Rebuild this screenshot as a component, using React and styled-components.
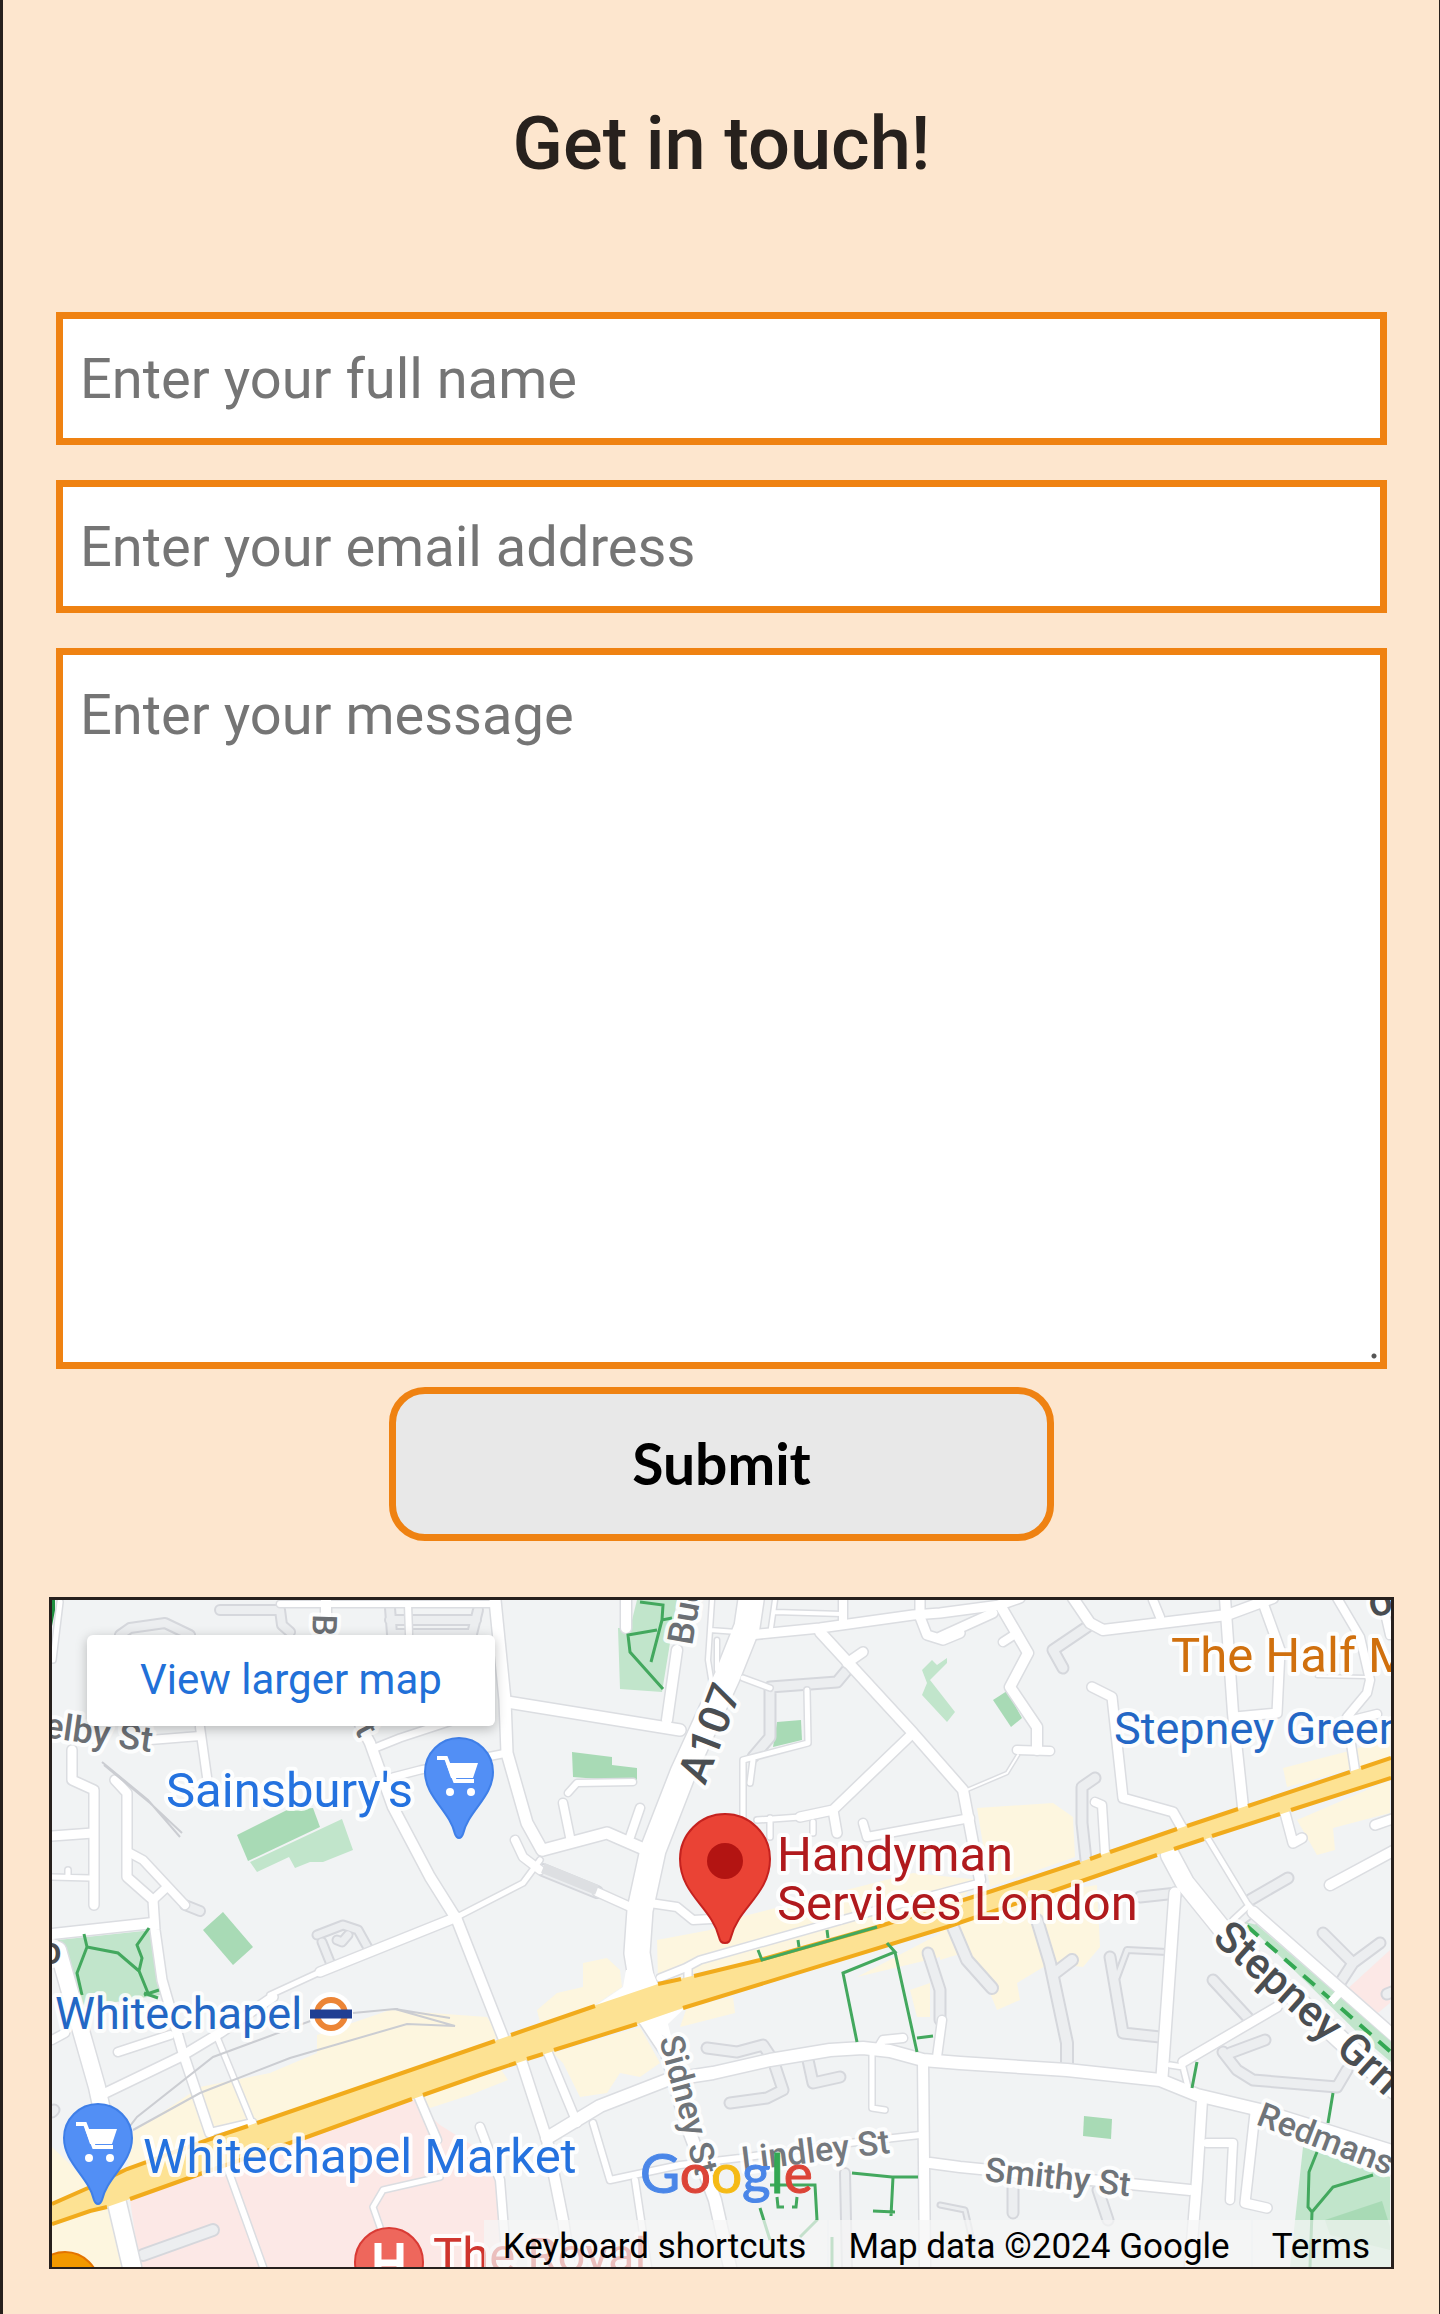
import React from "react";
import styled, { createGlobalStyle } from "styled-components";

const GlobalStyle = createGlobalStyle`
  *, *::before, *::after { box-sizing: border-box; }
  body {
    margin: 0;
    background: #fde6ce;
    font-family: Roboto, "Liberation Sans", sans-serif;
  }
`;

const Page = styled.main`
  min-height: 100vh;
  padding: 102px 45px 45px 46px;
  border-left: 3px solid #27201d;
  border-right: 1px solid #27201d;
  background: #fde6ce;
`;

const Title = styled.h1`
  margin: 0 0 126px;
  font-size: 74px;
  line-height: 84px;
  font-weight: 500;
  text-align: center;
  color: #27211d;
`;

const Form = styled.form`
  display: flex;
  flex-direction: column;
  gap: 35px;
  padding: 0 7px;
`;

const fieldStyle = `
  display: block;
  width: 100%;
  margin: 0;
  border: 7px solid #ef8212;
  border-radius: 0;
  outline: none;
  background-color: #fff;
  color: #27211d;
  font-family: inherit;
  font-size: 56px;
  line-height: 66px;
  &::placeholder { color: #757575; opacity: 1; }
`;

const Field = styled.input`
  ${fieldStyle}
  height: 133px;
  padding: 0 17px;
`;

const Message = styled.textarea`
  ${fieldStyle}
  height: 721px;
  padding: 27px 17px;
  resize: none;
  background-image: radial-gradient(circle, #555 2px, transparent 3px);
  background-size: 6px 6px;
  background-position: right 3px bottom 3px;
  background-repeat: no-repeat;
`;

const FormBody = styled.div`
  display: flex;
  flex-direction: column;
  gap: 18px;
`;

const Submit = styled.button`
  align-self: center;
  width: 50%;
  height: 154px;
  padding: 0 0 2px;
  border: 7px solid #ef8212;
  border-radius: 36px;
  background: #e8e8e8;
  color: #000;
  font-family: Lato, "Liberation Sans", sans-serif;
  font-size: 57px;
  font-weight: 700;
  cursor: pointer;
`;

const MapFrame = styled.section`
  position: relative;
  height: 672px;
  margin-top: 56px;
  border: 3px solid #27201d;
  border-bottom-width: 2px;
  overflow: hidden;
  background: #f1f3f4;
`;

const MapCanvas = styled.svg`
  display: block;
  width: 100%;
  height: 100%;
  font-family: Roboto, "Liberation Sans", sans-serif;
`;

const LargerMap = styled.a`
  position: absolute;
  top: 35px;
  left: 35px;
  padding: 19px 53px 21px;
  border-radius: 6px;
  background: #fff;
  box-shadow: 0 3px 12px rgba(0, 0, 0, 0.25);
  color: #2170d8;
  font-size: 42px;
  line-height: 51px;
  text-decoration: none;
`;

const Attribution = styled.div`
  position: absolute;
  right: 0;
  bottom: 0;
  display: flex;
  gap: 2px;
  height: 47px;
  font-size: 35px;
  line-height: 41px;
  color: #000;

  & > * {
    padding: 6px 21px 0 19px;
    background: rgba(245, 245, 245, 0.72);
  }
`;

const PlainButton = styled.button`
  border: 0;
  color: inherit;
  font: inherit;
  cursor: pointer;
`;

const PlainLink = styled.a`
  color: inherit;
  text-decoration: none;
`;

const COLORS = {
  shop: "#fdf6df",
  health: "#fce8e6",
  park: "#c1e5cb",
  lawn: "#a8dab5",
};

const AREAS = [
  ["shop", "M90 544 160 497 230 483 277 463 277 445 350 420 447 427 460 447 187 543 87 579Z"],
  ["shop", "M377 503 460 478 468 490 430 505 390 518Z"],
  ["shop", "M12 557 33 577 50 598 12 614ZM12 634 67 617 83 677 12 677Z"],
  ["shop", "M497 420 517 403 543 397 543 373 567 368 580 380 582 397 553 416 500 433Z"],
  ["shop", "M513 463 600 437 620 473 600 487 580 483 567 503 540 507 523 473Z"],
  ["shop", "M617 350 670 340 700 327 873 283 940 290 920 310 720 370 618 390Z"],
  ["shop", "M647 417 693 407 695 423 640 437Z"],
  ["shop", "M817 387 907 340 917 363 817 387ZM870 400 890 393 890 427 877 427Z"],
  ["shop", "M937 218 1013 213 1033 227 1035 267 950 297Z"],
  ["shop", "M1243 178 1313 160 1350 147 1350 168 1247 197Z"],
  ["shop", "M1257 230 1350 190 1350 223 1293 238 1295 260 1277 265Z"],
  ["shop", "M900 340 1010 302 1057 295 1060 357 1043 377 1010 373 977 393 980 410 957 420 950 403 923 363 900 370Z"],
  ["health", "M90 610 370 507 400 535 440 560 460 590 462 677 100 677Z"],
  ["health", "M1303 403 1350 360 1350 413 1333 427Z"],
  ["lawn", "M197 245 247 220 273 218 280 237 208 271Z"],
  ["park", "M210 272 302 229 313 260 283 272 270 272 255 278 249 267 217 282Z"],
  ["lawn", "M183 322 213 357 193 375 163 340Z"],
  ["park", "M18 350 113 340 120 405 45 417 27 405Z"],
  ["park", "M597 10 637 10 622 102 580 99 578 38 590 38Z"],
  ["lawn", "M532 162 572 167 572 175 597 178 597 192 533 187Z"],
  ["lawn", "M737 132 761 130 762 150 733 157Z"],
  ["park", "M882 80 892 70 897 75 907 68 907 73 890 90 915 122 907 132 882 105 887 93Z"],
  ["lawn", "M953 110 967 101 982 128 971 137Z"],
  ["lawn", "M1044 526 1072 529 1071 549 1043 546Z"],
  ["park", "M1263 557 1350 587 1350 677 1250 677Z"],
  ["lawn", "M1285 630 1342 611 1350 637 1350 660 1290 645Z"],
];

/* Each road is a path and the width of its surface. */
const LANES = [
  ["M145 315 160 321", 8],
  ["M180 20H240L242 35 250 42M80 45 90 38 125 33 150 45", 8],
  ["M350 18 352 44H432L438 20M350 30H436", 8],
  ["M807 80 797 92 730 97V147L713 167", 9],
  ["M503 280 557 302", 10],
  ["M1047 37 1013 60 1023 78", 9],
  ["M1055 188 1042 197 1042 233 1046 270", 9],
  ["M1210 310 1248 288M1100 307 1137 303", 9],
  ["M888 363 900 400V430", 9],
  ["M667 458 697 462 723 455 733 470 743 500 727 508 690 513", 9],
  ["M768 470 773 493 800 487", 9],
  ["M805 583 807 677", 8],
  ["M913 337 927 370 952 398", 10],
  ["M997 330 1010 373 1027 453V475M1015 383 1032 370", 10],
  ["M1070 367 1083 443 1120 447", 9],
  ["M1077 387 1087 360 1127 362", 4],
  ["M1173 390 1210 430M1225 450 1190 463", 9],
  ["M1183 462 1197 480 1213 490 1297 497 1307 480", 9],
  ["M1283 343 1313 373 1300 393M1313 373 1340 353M1352 402 1347 404", 9],
  ["M103 665 173 640", 10],
  ["M277 345 303 335 318 340 328 358M282 352 290 372M297 350 302 352 308 345", 7],
  ["M973 597V623M1058 600 1068 630", 9],
  ["M12 522 14 520", 9],
  ["M900 615 925 620 932 650", 3],
  ["M1220 327 1190 350", 6],
];

const STREETS = [
  ["M32 160V190L54 200V315", 9],
  ["M12 246 53 243", 9],
  ["M12 287 50 288M28 280V285", 5],
  ["M75 190 87 203V287L113 310 115 340 122 390 143 463 170 543", 9],
  ["M187 577 223 677", 6],
  ["M90 263 103 270 145 315M113 310 127 297", 8],
  ["M12 344 113 333", 10],
  ["M160 137 167 187M110 150 160 146", 8],
  ["M240 14 455 14M368 14 369 44", 6],
  ["M455 10 460 60 465 110 467 163 487 233 502 260", 11],
  ["M286 10V70L330 153 353 217 390 287 417 330 463 447", 10],
  ["M482 473 507 550 523 630 530 677", 10],
  ["M335 158 360 148 415 130M353 187 380 180 467 163", 7],
  ["M57 507 140 467 180 443 233 407", 9],
  ["M230 405 280 382", 5],
  ["M280 382 417 327", 9],
  ["M417 327 483 293 500 270", 5],
  ["M20 12 13 70", 5],
  ["M467 112 640 140", 11],
  ["M637 60 627 130M586 10V38", 10],
  ["M710 45 780 38 873 25 900 23 960 15 980 8", 9],
  ["M900 47 953 23M880 10V27L887 45 903 50 920 43", 9],
  ["M780 42 873 143 923 200 940 290", 10],
  ["M807 73 823 62", 9],
  ["M703 88 730 98", 5],
  ["M767 100 768 153 703 170V227M713 170 710 193", 5],
  ["M672 10 668 70 672 95M670 40 697 42M677 50V80", 4],
  ["M735 22 802 24M735 10 730 45", 4],
  ["M803 10V33M1113 10 1120 27", 8],
  ["M873 143 793 220 760 227M793 220 797 243", 9],
  ["M760 227 717 230M730 228V247M773 232V243", 5],
  ["M823 233 827 247 930 228", 8],
  ["M503 260 567 243 613 263", 11],
  ["M523 213 530 247M600 218 590 247", 8],
  ["M528 203 537 193 593 192", 6],
  ["M475 250 483 267 500 280", 8],
  ["M557 302 597 320M610 313 637 317 653 330 690 328", 8],
  ["M960 15 988 63 970 97 997 137V160", 10],
  ["M977 160 1010 161M963 52 977 43", 8],
  ["M978 165 967 183 927 200M1277 86 1327 87", 2],
  ["M1033 8 1050 33 1063 40 1187 25 1233 8", 10],
  ["M1052 97 1072 107 1083 208 1133 222 1142 238", 9],
  ["M1185 8 1193 123 1203 217", 10],
  ["M1223 13 1240 60 1237 123 1195 127", 9],
  ["M1297 8 1320 47 1330 90 1327 103 1307 127 1315 180M1313 130 1337 124", 8],
  ["M1342 10 1350 45", 8],
  ["M1055 212 1062 215 1065 263", 8],
  ["M1245 223 1253 253 1262 248M1335 235 1355 228", 9],
  ["M1290 295 1355 260", 10],
  ["M1167 247 1207 313 1230 340M1207 317 1193 330", 5],
  ["M1213 322 1355 447", 11],
  ["M1135 303 1133 330 1122 487", 11],
  ["M507 548 560 516 627 490 673 483 730 470 790 460 823 458 850 461 883 470 920 473 1027 480 1120 490 1157 505 1220 520 1355 562", 12],
  ["M508 463 537 533", 8],
  ["M605 430 627 463 645 530 675 610 690 677", 12],
  ["M553 533 570 590 640 575 700 568 800 554 880 545", 6],
  ["M595 590 608 677", 6],
  ["M883 470 885 677", 10],
  ["M902 430 897 467M840 455 843 450 863 448", 8],
  ["M832 463V518L845 520", 5],
  ["M890 573 920 577 1150 600", 10],
  ["M440 537 460 590 467 677", 8],
  ["M620 388 645 378 660 370 830 322 940 293M648 378V388", 7],
  ["M1237 417 1143 472", 9],
  ["M1130 475 1143 477 1148 497", 5],
  ["M1162 510 1157 590 1150 677", 10],
  ["M1167 553 1193 553 1190 610", 8],
  ["M1215 523 1205 613 1227 618", 9],
  ["M18 360 57 497 62 520", 16],
  ["M78 462 130 445M12 450 25 443", 8],
  ["M177 447 213 535", 5],
  ["M170 542 213 532", 6],
  ["M377 503 397 550", 8],
  ["M400 587 343 600 333 617 340 637", 5],
  ["M77 613 92 677", 18],
  ["M1130 265 1145 293 1187 345 1355 500", 18],
  ["M712 3 707 37 687 87 643 183 613 260 600 320 597 363 603 400", 25],
];

const FOOTPATHS = [
  "M600 12 623 15 622 30 632 28M617 40 588 45 590 62 623 99M622 30 611 72",
  "M44 344 47 357 37 383 42 405M47 357 78 363 99 381 108 403M109 338 97 355 102 368 99 381M104 405 119 400M104 403 118 408",
  "M718 360 722 370 837 337M758 350 759 357M787 340 788 348",
  "M847 353 855 362 803 383 817 452M855 362 877 462M877 448 893 446",
  "M812 583 852 587 878 587M853 587 851 626M833 621 855 622",
  "M730 595 775 595 777 630 760 647M720 618 730 650M737 607 738 617 744 617M757 607 756 617H752",
  "M792 647V677",
  "M1157 472 1152 498M1293 503 1288 533",
  "M1277 562 1269 582 1268 617 1272 622 1270 677M1272 622 1293 597 1333 585",
];

const RAILS = [
  "M90 536 97 527 173 467 273 430 313 423 355 419 410 428M355 419 415 436 367 434 250 468 160 503 93 540",
  "M62 172 108 210 140 247M64 175 110 213 142 243",
];

const LABELS = [
  { x: 3, y: 147, turn: 8, size: 36, weight: 500, color: "#6b6f74", text: "elby St" },
  { x: 273, y: 24, turn: 92, size: 34, weight: 500, color: "#6b6f74", text: "B" },
  { x: 314, y: 139, turn: 62, size: 34, weight: 500, color: "#6b6f74", text: "t" },
  { x: 652, y: 56, turn: -80, size: 36, weight: 500, color: "#6b6f74", text: "Buc" },
  { x: 665, y: 196, turn: -69, size: 43, weight: 500, color: "#4a4e52", text: "A107" },
  { x: 619, y: 449, turn: 75, size: 34, weight: 500, color: "#6f7479", text: "Sidney St" },
  { x: 703, y: 581, turn: -7, size: 34, weight: 500, color: "#75797e", text: "Lindley St" },
  { x: 944, y: 591, turn: 6, size: 34, weight: 500, color: "#6f7479", text: "Smithy St" },
  { x: 1215, y: 534, turn: 21, size: 34, weight: 500, color: "#6f7479", text: "Redmans" },
  { x: 1171, y: 350, turn: 42, size: 43, weight: 500, color: "#4a4e52", text: "Stepney Grn" },
  { x: 0, y: 374, turn: 0, size: 38, weight: 500, color: "#4a4e52", text: "o" },
  { x: 1332, y: 28, turn: -15, size: 42, weight: 500, color: "#4a4e52", text: "o" },
  { x: 126, y: 217, turn: 0, size: 49, weight: 400, color: "#2472df", text: "Sainsbury's" },
  { x: 15, y: 439, turn: 0, size: 45, weight: 400, color: "#2367c5", text: "Whitechapel" },
  { x: 103, y: 583, turn: 0, size: 49, weight: 400, color: "#2472df", text: "Whitechapel Market" },
  { x: 1131, y: 82, turn: 0, size: 49, weight: 400, color: "#d0700e", text: "The Half Moon" },
  { x: 1074, y: 154, turn: 0, size: 45, weight: 400, color: "#2367c5", text: "Stepney Green" },
  { x: 737, y: 281, turn: 0, size: 49, weight: 400, color: "#b01a1d", text: "Handyman" },
  { x: 737, y: 330, turn: 0, size: 49, weight: 400, color: "#b01a1d", text: "Services London" },
  { x: 393, y: 682, turn: 0, size: 49, weight: 400, color: "#cf352e", text: "The Royal" },
];

const BLUE = "#4a86e8";
const RED = "#dc4437";
const GOLD = "#f5ba15";
const GREEN = "#34a853";

const BRAND = [
  ["G", BLUE],
  ["o", RED],
  ["o", GOLD],
  ["g", BLUE],
  ["l", GREEN],
  ["e", RED],
];

function CartPin({ x, y }) {
  return (
    <g transform={`translate(${x} ${y})`}>
      <path
        d="M0 66C-2 66-3 65-4 62C-9 39-34 25-34 0A34 34 0 0 1 34 0C34 25 9 39 4 62C3 65 2 66 0 66Z"
        fill="#528ff5"
        stroke="#3f7fe8"
        strokeWidth="2"
      />
      <path d="M-22-14H-13L-4 9H15" fill="none" stroke="#fff" strokeWidth="4" />
      <path d="M-13-9H19L14 6H-8Z" fill="#fff" />
      <circle cx="-9" cy="20" r="4" fill="#fff" />
      <circle cx="12" cy="20" r="4" fill="#fff" />
    </g>
  );
}

function StreetMap() {
  return (
    <MapCanvas
      viewBox="12 10 1339 667"
      preserveAspectRatio="xMidYMid slice"
      role="img"
      aria-label="Street map of Whitechapel"
    >
      {AREAS.map(([kind, d]) => (
        <path key={d} d={d} fill={COLORS[kind]} />
      ))}
      <g fill="none" strokeLinecap="round" strokeLinejoin="round">
        {LANES.map(([d, w]) => (
          <path key={d} d={d} stroke="#d5d7dc" strokeWidth={w + 4} />
        ))}
        {LANES.map(([d, w]) => (
          <path key={d} d={d} stroke="#eceef0" strokeWidth={w} />
        ))}
        {STREETS.map(([d, w]) => (
          <path key={d} d={d} stroke="#dbdde1" strokeWidth={w + 3} />
        ))}
        {STREETS.map(([d, w]) => (
          <path key={d} d={d} stroke="#fff" strokeWidth={w} />
        ))}
      </g>
      <path d="M555 416 583 397 586 380H612L618 395 603 410ZM597 432 645 418 628 434 632 450Z" fill="#fff" />
      <g fill="none" stroke="#cbcdd2" strokeWidth="2">
        {RAILS.map((d) => (
          <path key={d} d={d} />
        ))}
      </g>
      <path d="M503 278 557 300" stroke="#dddfe2" strokeWidth="10" />
      <path
        d="M12 614 48 598 87 579 187 543 460 449 553 416 618 394 720 370 837 337 952 301 1043 271 1143 237 1351 168V188L1117 265 1010 302 907 337 643 418 597 434 440 485 267 547 160 584 90 609 67 617 50 621 12 634Z"
        fill="#fde293"
      />
      <g fill="none" stroke="#f1ab1c" strokeWidth="4">
        <path d="M12 614 48 598 87 579 187 543 208 536M217 533 455 451M471 445 555 416M618 394 641 389M654 386 720 370 837 337 952 301 1040 272M1050 269 1061 265M1070 262 1137 239M1147 236 1198 219M1208 216 1310 182M1321 178 1351 168" />
        <path d="M12 634 50 621 67 617M90 609 160 584 267 547 372 509M383 505 440 485 476 473M487 469 503 464M514 460 597 434M643 418 907 337 1010 302 1117 265M1134 259 1164 249M1172 246 1240 224M1251 220 1351 188" />
      </g>
      <path d="M1205 332 1217 335 1351 452V472L1325 450Z" fill={COLORS.park} />
      <path d="M1207 336 1352 463" fill="none" stroke="#34a853" strokeWidth="4" strokeDasharray="15 10" />
      <path d="M1291 412 1302 400" stroke="#fff" strokeWidth="8" />
      <g fill="none" stroke="#43a85e" strokeWidth="3">
        {FOOTPATHS.map((d) => (
          <path key={d} d={d} />
        ))}
      </g>
      <path d="M12 10H15V20L12 36Z" fill="#1e8e3e" />

      <circle cx="25" cy="696" r="34" fill="#f29900" stroke="#e37400" strokeWidth="2" />
      <g>
        <circle cx="349" cy="672" r="34" fill="#ee675c" stroke="#d93b35" strokeWidth="2" />
        <path d="M338 653V680M360 653V680M338 673H360" fill="none" stroke="#fff" strokeWidth="7" />
      </g>

      {LABELS.map((l) => (
        <text
          key={l.text + l.x}
          transform={`translate(${l.x} ${l.y}) rotate(${l.turn})`}
          fontSize={l.size}
          fontWeight={l.weight}
          fill={l.color}
          stroke="#fff"
          strokeOpacity="0.85"
          strokeWidth="8"
          strokeLinejoin="round"
          paintOrder="stroke"
        >
          {l.text}
        </text>
      ))}

      <g>
        <circle cx="291" cy="424" r="22" fill="#fff" />
        <circle cx="291" cy="424" r="14" fill="none" stroke="#ec8536" strokeWidth="6" />
        <path d="M270 424H312" stroke="#203f93" strokeWidth="9" />
      </g>
      <CartPin x={419} y={182} />
      <CartPin x={58} y={548} />
      <g>
        <path
          d="M685 353C681 353 680 351 679 347C672 318 640 304 640 269A45 45 0 0 1 730 269C730 304 698 318 691 347C690 351 689 353 685 353Z"
          fill="#ea4335"
          stroke="#c5221f"
          strokeWidth="2"
        />
        <circle cx="685" cy="271" r="18" fill="#b31412" />
      </g>
      <text x="600" y="603" fontFamily="Lato, sans-serif" fontSize="55" strokeWidth="1">
        {BRAND.map(([letter, color], i) => (
          <tspan key={i} fill={color} stroke={color}>
            {letter}
          </tspan>
        ))}
      </text>
    </MapCanvas>
  );
}

export default function App() {
  return (
    <>
      <GlobalStyle />
      <Page>
        <Title>Get in touch!</Title>
        <Form onSubmit={(e) => e.preventDefault()}>
          <Field type="text" name="name" aria-label="Full name" placeholder="Enter your full name" />
          <Field type="email" name="email" aria-label="Email address" placeholder="Enter your email address" />
          <FormBody>
            <Message name="message" aria-label="Message" placeholder="Enter your message" />
            <Submit type="submit">Submit</Submit>
          </FormBody>
        </Form>
        <MapFrame>
          <StreetMap />
          <LargerMap href="#map">View larger map</LargerMap>
          <Attribution>
            <PlainButton type="button">Keyboard shortcuts</PlainButton>
            <span>Map data ©2024 Google</span>
            <PlainLink href="#terms">Terms</PlainLink>
          </Attribution>
        </MapFrame>
      </Page>
    </>
  );
}
